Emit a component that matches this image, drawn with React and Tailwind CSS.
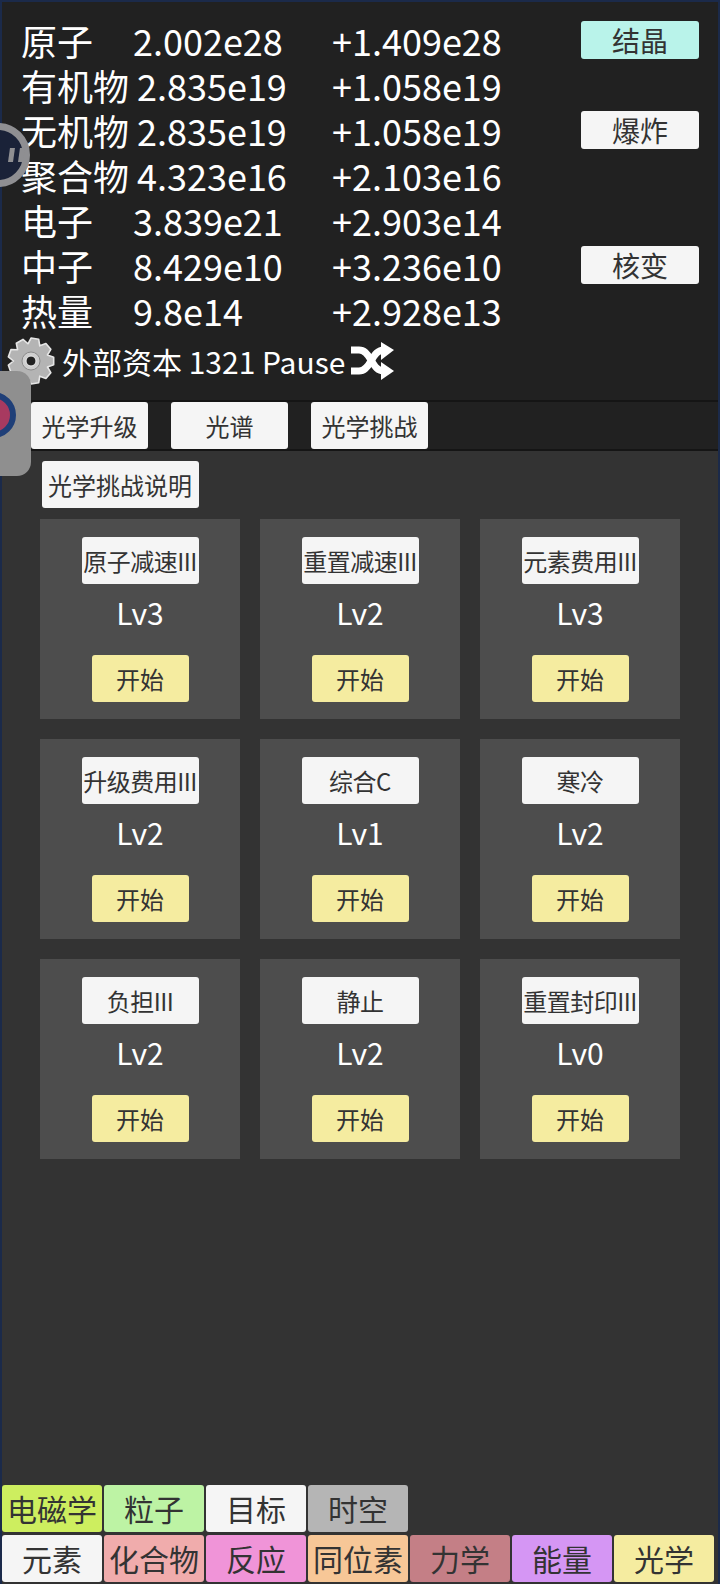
import React from "react";

const stats = [
  ["原子", "2.002e28", "+1.409e28"],
  ["有机物", "2.835e19", "+1.058e19"],
  ["无机物", "2.835e19", "+1.058e19"],
  ["聚合物", "4.323e16", "+2.103e16"],
  ["电子", "3.839e21", "+2.903e14"],
  ["中子", "8.429e10", "+3.236e10"],
  ["热量", "9.8e14", "+2.928e13"],
];

const challenges = [
  ["原子减速III", "Lv3"],
  ["重置减速III", "Lv2"],
  ["元素费用III", "Lv3"],
  ["升级费用III", "Lv2"],
  ["综合C", "Lv1"],
  ["寒冷", "Lv2"],
  ["负担III", "Lv2"],
  ["静止", "Lv2"],
  ["重置封印III", "Lv0"],
];

const navTop = [
  ["电磁学", "bg-[#cdee5f]"],
  ["粒子", "bg-[#bdf3a4]"],
  ["目标", "bg-[#f5f5f5]"],
  ["时空", "bg-[#b5b5b5]"],
];

const navBottom = [
  ["元素", "bg-[#f5f5f5]"],
  ["化合物", "bg-[#f0acac]"],
  ["反应", "bg-[#f094d8]"],
  ["同位素", "bg-[#f7c797]"],
  ["力学", "bg-[#c47f86]"],
  ["能量", "bg-[#d596f4]"],
  ["光学", "bg-[#f5eca0]"],
];

// 8 tooth gear outline
const gearPath = () => {
  const pts = [];
  for (let i = 0; i < 9; i++) {
    const a = (i / 9) * Math.PI * 2;
    const step = (Math.PI * 2) / 9;
    [
      [-0.5, 17.5],
      [-0.24, 23],
      [0.24, 23],
      [0.5, 17.5],
    ].forEach(([o, r]) => {
      const t = a + o * step;
      pts.push(`${(24 + r * Math.cos(t)).toFixed(2)} ${(24 + r * Math.sin(t)).toFixed(2)}`);
    });
  }
  return "M" + pts.join("L") + "Z";
};

const Gear = () => (
  <svg width="48" height="48" viewBox="0 0 48 48" className="shrink-0">
    <path d={gearPath()} fill="#b4b4b4" stroke="#e6e6e6" strokeWidth="1.6" strokeLinejoin="round" />
    <circle cx="24" cy="24" r="9" fill="#cfcfcf" stroke="#8c8c8c" strokeWidth="1" />
    <circle cx="24" cy="24" r="5" fill="#222" stroke="#eee" strokeWidth="1" />
  </svg>
);

const Shuffle = () => (
  <svg width="44" height="38" viewBox="0 0 44 38" className="shrink-0">
    <path d="M0 8h8c5 0 8 3 12 10s7 11 13 11" fill="none" stroke="#fff" strokeWidth="7" />
    <path d="M0 29h8c5 0 8-3 12-10s7-11 13-11" fill="none" stroke="#fff" strokeWidth="7" />
    <path d="M30 0l13 8-13 10z" fill="#fff" />
    <path d="M30 20l13 9-13 9z" fill="#fff" />
  </svg>
);

const Btn = ({ className = "", children }) => (
  <button className={`rounded-[3px] text-[#333] flex items-center justify-center whitespace-nowrap ${className}`}>
    {children}
  </button>
);

export default function App() {
  return (
    <div
      className="relative w-[720px] h-[1584px] overflow-hidden bg-[#1b2a4a] pt-[2px] px-[2px] flex flex-col text-white"
      style={{ fontFamily: '"Noto Sans CJK SC", "Noto Sans", sans-serif' }}
    >
      {/* top stats */}
      <div className="bg-[#212121] h-[398px] shrink-0 flex justify-between pl-[19px] pr-[19px] pt-[16px]">
        <div>
          {stats.map(([name, value, delta]) => (
            <div key={name} className="flex h-[45px] items-center text-[36px] leading-[45px] whitespace-nowrap">
              <div className="flex w-[311px]">
                <span className="min-w-[112px] pr-2 box-border">{name}</span>
                <span>{value}</span>
              </div>
              <span>{delta}</span>
            </div>
          ))}
          <div className="flex items-center h-[58px] mt-[-1px] -ml-[14px] text-[30px] whitespace-nowrap">
            <Gear />
            <span className="ml-[7px]">外部资本 1321 Pause</span>
            <span className="ml-[6px]"><Shuffle /></span>
          </div>
        </div>
        <div className="flex flex-col pt-[3px] text-[28px]">
          <Btn className="w-[118px] h-[38px] bg-[#b9f3ea]">结晶</Btn>
          <Btn className="w-[118px] h-[38px] bg-[#f5f5f5] mt-[52px]">爆炸</Btn>
          <Btn className="w-[118px] h-[38px] bg-[#f5f5f5] mt-[97px]">核变</Btn>
        </div>
      </div>

      {/* sub tabs */}
      <div className="h-[51px] shrink-0 bg-[#212121] border-y-2 border-[#151515] flex items-center gap-[23px] pl-[29px] text-[24px]">
        <Btn className="w-[117px] h-[47px] bg-[#f5f5f5]">光学升级</Btn>
        <Btn className="w-[117px] h-[47px] bg-[#f5f5f5]">光谱</Btn>
        <Btn className="w-[117px] h-[47px] bg-[#f5f5f5]">光学挑战</Btn>
      </div>

      {/* challenge panel */}
      <div className="flex-1 bg-[#333333] relative pt-[10px] pl-[38px]">
        <Btn className="w-[157px] h-[47px] bg-[#f5f5f5] text-[24px] ml-[1.5px]">光学挑战说明</Btn>
        <div className="grid grid-cols-[200px_200px_200px] gap-[20px] mt-[11px]">
          {challenges.map(([name, level]) => (
            <div key={name} className="h-[200px] bg-[#4d4d4d] flex flex-col items-center pt-[18px]">
              <Btn className="w-[117px] h-[47px] bg-[#f5f5f5] text-[24px] tracking-[-0.5px] overflow-hidden">{name}</Btn>
              <div className="text-[30px] leading-[40px] mt-[8px]">{level}</div>
              <Btn className="w-[97px] h-[47px] bg-[#f5eca0] text-[24px] mt-[23px]">开始</Btn>
            </div>
          ))}
        </div>

        {/* bottom nav */}
        <div className="absolute left-0 bottom-[2px] flex flex-col gap-[3px]">
          <div className="flex gap-[2px]">
            {navTop.map(([label, bg]) => (
              <Btn key={label} className={`w-[100px] h-[47px] text-[30px] ${bg}`}>{label}</Btn>
            ))}
          </div>
          <div className="flex gap-[2px]">
            {navBottom.map(([label, bg]) => (
              <Btn key={label} className={`w-[100px] h-[47px] text-[30px] ${bg}`}>{label}</Btn>
            ))}
          </div>
        </div>
      </div>

      {/* floating widgets over the page */}
      <div className="absolute left-[-34px] top-[123px] w-[64px] h-[64px] rounded-full border-[7px] border-[#8f8f92] bg-[#1a2238] flex items-center justify-center gap-[5px] pl-[36px]">
        <span className="w-[6px] h-[14px] bg-[#8f8f92] skew-x-[-8deg]" />
        <span className="w-[6px] h-[14px] bg-[#8f8f92] skew-x-[-8deg]" />
      </div>
      <div className="absolute left-0 top-[371px] w-[31px] h-[105px] rounded-r-[14px] bg-[#8f8f8f] overflow-hidden">
        <div className="absolute left-[-30px] top-[21px] w-[46px] h-[46px] rounded-full bg-[#a83a60] border-[6px] border-[#1f3f78]" />
      </div>
    </div>
  );
}
